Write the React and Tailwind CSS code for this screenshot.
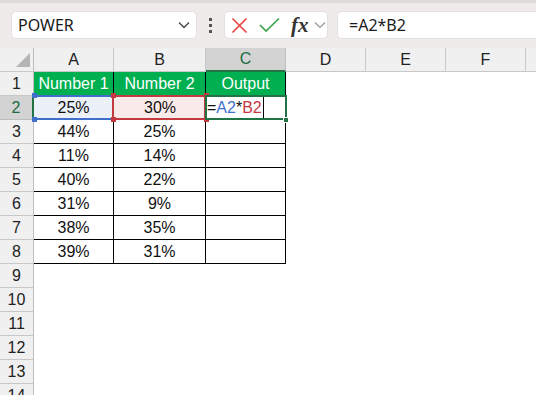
import React from 'react';

const cols = [
  { label: 'A', w: 'w-[80px]' },
  { label: 'B', w: 'w-[92px]' },
  { label: 'C', w: 'w-[80px]' },
  { label: 'D', w: 'w-[80px]' },
  { label: 'E', w: 'w-[80px]' },
  { label: 'F', w: 'w-[80px]' },
];

const data = [
  ['44%', '25%'],
  ['11%', '14%'],
  ['40%', '22%'],
  ['31%', '9%'],
  ['38%', '35%'],
  ['39%', '31%'],
];

const cellFont = { fontFamily: '"Liberation Sans", Arial, sans-serif' };

const Handle = ({ className }) => (
  <div className={`absolute w-[5px] h-[5px] ${className}`} />
);

const RowHead = ({ n, selected }) => (
  <div
    className={`w-[34px] h-[24px] shrink-0 flex items-center justify-center border-b text-[16px] ${
      selected
        ? 'bg-[#d3d3d3] text-[#1d6b45] border-r-2 border-r-[#217346] border-b-[#bdbdbd]'
        : 'bg-[#f0f0f0] text-[#222] border-r border-r-[#bdbdbd] border-b-[#c8c8c8]'
    }`}
    style={cellFont}
  >
    {n}
  </div>
);

const Toolbar = () => (
  <div className="h-[48px] bg-[#efebea] border-t-[3px] border-t-[#dedad9] flex items-start pt-[8px] pl-[11px] gap-0">
    <div className="w-[186px] h-[28px] bg-white rounded-[5px] border border-[#e3e0df] flex items-center justify-between pl-[6px] pr-[6px]">
      <span className="text-[16px] text-[#1a1a1a]" style={{ fontFamily: '"Noto Sans", "Open Sans", sans-serif' }}>POWER</span>
      <svg width="12" height="8" viewBox="0 0 12 8">
        <path d="M1 1.5 L6 6.5 L11 1.5" fill="none" stroke="#444" strokeWidth="1.3" />
      </svg>
    </div>
    <div className="w-[27px] h-[28px] flex flex-col items-center justify-center gap-[3px]">
      <div className="w-[3px] h-[3px] bg-[#555]" />
      <div className="w-[3px] h-[3px] bg-[#555]" />
      <div className="w-[3px] h-[3px] bg-[#555]" />
    </div>
    <div className="w-[104px] h-[28px] bg-white rounded-[5px] border border-[#e3e0df] flex items-center pl-[6px] gap-[11px]">
      <svg width="17" height="17" viewBox="0 0 17 17">
        <path d="M1.5 1.5 L15.5 15.5 M15.5 1.5 L1.5 15.5" stroke="#e8403a" strokeWidth="1.6" />
      </svg>
      <svg width="21" height="16" viewBox="0 0 21 16">
        <path d="M1 8 L7 14 L20 1.5" fill="none" stroke="#3fa34d" strokeWidth="1.7" />
      </svg>
      <div className="flex items-center gap-[5px]">
        <span className="text-[21px] italic font-bold text-[#333] leading-none" style={{ fontFamily: '"Liberation Serif", "Times New Roman", serif' }}>
          fx
        </span>
        <svg width="12" height="8" viewBox="0 0 12 8">
          <path d="M1 1.5 L6 6.5 L11 1.5" fill="none" stroke="#999" strokeWidth="1.2" />
        </svg>
      </div>
    </div>
    <div className="ml-[9px] flex-1 h-[28px] bg-white rounded-l-[5px] border border-r-0 border-[#e3e0df] flex items-center pl-[11px]">
      <span className="text-[16px] text-[#1a1a1a]" style={{ fontFamily: '"Noto Sans", "Open Sans", sans-serif' }}>=A2*B2</span>
    </div>
  </div>
);

const HeaderRow = () => (
  <div className="flex h-[24px] bg-[#f0f0f0]" style={cellFont}>
    <div className="w-[34px] shrink-0 h-full border-r border-r-[#bdbdbd] border-b border-b-[#c8c8c8] relative">
      <svg className="absolute right-[3px] bottom-[4px]" width="14" height="14" viewBox="0 0 14 14">
        <path d="M14 0 L14 14 L0 14 Z" fill="#b5b5b5" />
      </svg>
    </div>
    {cols.map((c) => (
      <div
        key={c.label}
        className={`${c.w} shrink-0 h-full flex items-center justify-center text-[16px] border-r ${
          c.label === 'C'
            ? 'bg-[#d3d3d3] text-[#1d6b45] border-r-[#bdbdbd] border-b-2 border-b-[#217346]'
            : 'text-[#222] border-r-[#c8c8c8] border-b border-b-[#c8c8c8]'
        }`}
      >
        {c.label}
      </div>
    ))}
    <div className="flex-1 h-full border-b border-b-[#c8c8c8]" />
  </div>
);

const Row1 = () => (
  <div className="flex h-[24px]" style={cellFont}>
    <RowHead n={1} />
    {['Number 1', 'Number 2', 'Output'].map((t, i) => (
      <div
        key={t}
        className={`${cols[i].w} shrink-0 h-full bg-[#00b050] text-white text-[16px] flex items-center justify-center border-r border-r-black`}
      >
        {t}
      </div>
    ))}
    <div className="flex-1 bg-white" />
  </div>
);

const Row2 = () => (
  <div className="flex h-[24px]" style={cellFont}>
    <RowHead n={2} selected />
    <div className="w-[80px] shrink-0 h-full bg-[#ebf0f9] relative flex items-center justify-center text-[16px] text-[#111] border-r border-r-black">
      25%
      <div className="absolute left-0 right-0 top-[-1px] h-[2px] bg-[#3f6fcb]" />
      <div className="absolute left-0 right-0 bottom-0 h-[2px] bg-[#3f6fcb]" />
      <Handle className="left-[-2px] top-[-3px] bg-[#3f6fcb]" />
      <Handle className="left-[-2px] bottom-[-2px] bg-[#3f6fcb]" />
    </div>
    <div className="w-[92px] shrink-0 h-full bg-[#fbeaea] relative flex items-center justify-center text-[16px] text-[#111]">
      30%
      <div className="absolute left-[-2px] right-0 top-[-1px] bottom-0 border-2 border-[#c4393f]" />
      <Handle className="left-[-3px] top-[-3px] bg-[#c4393f]" />
      <Handle className="left-[-3px] bottom-[-2px] bg-[#c4393f]" />
      <Handle className="right-[-3px] top-[-3px] bg-[#c4393f]" />
      <Handle className="right-[-3px] bottom-[-2px] bg-[#c4393f]" />
    </div>
    <div className="w-[80px] shrink-0 h-full bg-white relative flex items-stretch text-[16px]">
      <div className="absolute left-[-1px] right-[-1px] top-[-1px] bottom-0 border-2 border-[#217346]" />
      <div className="flex items-center pl-[1px] pr-[1px] border-r border-r-black my-[1px]">
        <span className="text-[#111]">=</span>
        <span className="text-[#3f6fcb]">A2</span>
        <span className="text-[#111]">*</span>
        <span className="text-[#c4393f]">B2</span>
      </div>
      <Handle className="right-[-3px] bottom-[-3px] bg-[#217346] border border-white w-[6px] h-[6px]" />
    </div>
    <div className="flex-1 bg-white" />
  </div>
);

const DataRow = ({ n, a, b }) => (
  <div className="flex h-[24px]" style={cellFont}>
    <RowHead n={n} />
    <div className="w-[80px] shrink-0 h-full flex items-center justify-center text-[16px] text-[#111] border-r border-b border-black">
      {a}
    </div>
    <div className="w-[92px] shrink-0 h-full flex items-center justify-center text-[16px] text-[#111] border-r border-b border-black">
      {b}
    </div>
    <div className="w-[80px] shrink-0 h-full border-r border-b border-black" />
    <div className="flex-1 bg-white" />
  </div>
);

const EmptyRow = ({ n }) => (
  <div className="flex h-[24px]" style={cellFont}>
    <RowHead n={n} />
    <div className="flex-1 bg-white" />
  </div>
);

export default function App() {
  return (
    <div className="w-[536px] h-[395px] overflow-hidden bg-white">
      <Toolbar />
      <HeaderRow />
      <Row1 />
      <Row2 />
      {data.map((r, i) => (
        <DataRow key={i} n={i + 3} a={r[0]} b={r[1]} />
      ))}
      {[9, 10, 11, 12, 13, 14].map((n) => (
        <EmptyRow key={n} n={n} />
      ))}
    </div>
  );
}
